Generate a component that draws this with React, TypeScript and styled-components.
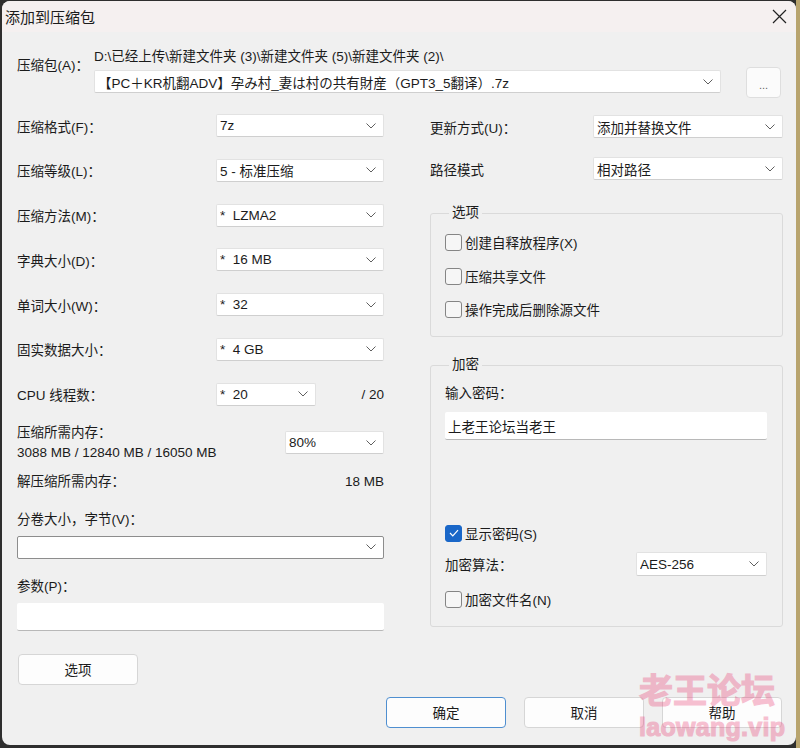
import React from 'react';
import styled, {createGlobalStyle} from 'styled-components';

const GlobalStyle = createGlobalStyle`
  html, body {
    margin: 0;
    padding: 0;
  }
  body {
    width: 800px;
    height: 748px;
    overflow: hidden;
    background: linear-gradient(to right, #2e2e2e 0 796px, #b8a46e 796px);
    font-family: "Liberation Sans", "Noto Sans CJK SC", sans-serif;
    font-size: 13.5px;
    color: #1b1b1b;
  }
`;

const Window = styled.div`
  position: relative;
  margin: 1px 0 0 2px;
  width: 794px;
  height: 744px;
  background: #f0f0f0;
  border-radius: 8px;
  overflow: hidden;
  display: flex;
  flex-direction: column;
`;

const TitleBar = styled.div`
  height: 31px;
  flex: none;
  display: flex;
  align-items: center;
  justify-content: space-between;
  padding: 0 9px 0 3px;
  background: #f5f0f0;
  font-size: 15px;
`;

const CloseIcon = styled.svg`
  width: 15px;
  height: 15px;
`;

const Content = styled.div`
  padding: 15px 13px 0 15px;
`;

const ArchiveRow = styled.div`
  display: flex;
  align-items: flex-start;
`;

const ArchiveLabel = styled.div`
  width: 77px;
  margin-top: 9px;
  line-height: 20px;
`;

const ArchiveMain = styled.div`
  width: 627px;
  display: flex;
  flex-direction: column;
  gap: 3px;
`;

const PathText = styled.div`
  line-height: 20px;
  white-space: nowrap;
`;

const BrowseButton = styled.div`
  margin: 20px 0 0 25px;
  width: 35px;
  height: 31px;
  box-sizing: border-box;
  background: #fbfbfb;
  border: 1px solid #dedede;
  border-radius: 4px;
  color: #666;
  font-size: 11px;
  display: flex;
  align-items: flex-end;
  justify-content: center;
  padding-bottom: 6px;
`;

const MainGrid = styled.div`
  margin-top: 16px;
  display: grid;
  grid-template-columns: 367px 353px;
  column-gap: 46px;
  align-items: start;
`;

const Column = styled.div<{ $gap?: number }>`
  display: flex;
  flex-direction: column;
  gap: ${(p) => p.$gap ?? 0}px;
`;

const FieldRow = styled.div`
  height: 23px;
  display: flex;
  align-items: center;
  justify-content: space-between;
`;

const CpuRow = styled(FieldRow)`
  justify-content: flex-start;
`;

const CpuLabel = styled.span`
  width: 199px;
  flex: none;
`;

const CpuTotal = styled.span`
  margin-left: auto;
`;

const ComboBox = styled.div<{ $width?: number; $height?: number; $outlined?: boolean }>`
  width: ${(p) => (p.$width ? `${p.$width}px` : '100%')};
  height: ${(p) => p.$height ?? 23}px;
  box-sizing: border-box;
  flex: none;
  background: #fff;
  border: 1px solid ${(p) => (p.$outlined ? '#8d8d8d' : '#e2e2e2')};
  border-bottom-color: ${(p) => (p.$outlined ? '#8d8d8d' : '#cfcfcf')};
  border-radius: 2px;
  display: flex;
  align-items: center;
  padding: 0 7px 0 3px;
  white-space: pre;
`;

const ComboValue = styled.span`
  flex: 1;
  overflow: hidden;
`;

const Chevron = styled.svg`
  width: 10px;
  height: 6px;
  flex: none;
`;

const TextLine = styled.div<{ $top?: number }>`
  line-height: 20px;
  margin-top: ${(p) => p.$top ?? 0}px;
  display: flex;
  justify-content: space-between;
  white-space: nowrap;
`;

const MemoryBlock = styled.div`
  margin-top: 17px;
  display: flex;
  align-items: center;
  justify-content: space-between;
`;

const TextInput = styled.div<{ $top?: number }>`
  margin-top: ${(p) => p.$top ?? 0}px;
  height: 28px;
  box-sizing: border-box;
  background: #fff;
  border-bottom: 1.5px solid #b8b8b8;
  border-radius: 2px;
  display: flex;
  align-items: center;
  padding: 0 3px;
`;

const PushButton = styled.div<{ $primary?: boolean }>`
  width: 120px;
  height: 31px;
  box-sizing: border-box;
  background: #fdfdfd;
  border: ${(p) => (p.$primary ? '1.5px solid #4f8fd0' : '1px solid #d6d6d6')};
  border-radius: 4px;
  display: flex;
  align-items: center;
  justify-content: center;
`;

const OptionsButton = styled(PushButton)`
  margin: 23px 0 0 1px;
`;

const Group = styled.fieldset<{ $top: number }>`
  margin: ${(p) => p.$top}px 0 0;
  padding: 0 15px 0 14px;
  border: 1px solid #dadada;
  border-radius: 3px;
  min-width: 0;
`;

const Legend = styled.legend`
  margin-left: 4px;
  padding: 0 3px;
  line-height: 20px;
`;

const CheckRow = styled.label<{ $top?: number }>`
  margin-top: ${(p) => p.$top ?? 0}px;
  height: 20px;
  display: flex;
  align-items: center;
  gap: 3px;
`;

const Box = styled.span<{ $checked?: boolean }>`
  width: 17px;
  height: 17px;
  box-sizing: border-box;
  border-radius: 3px;
  border: 1px solid ${(p) => (p.$checked ? '#1a67c8' : '#858585')};
  background: ${(p) => (p.$checked ? '#1a67c8' : '#f6f6f6')};
  display: flex;
  align-items: center;
  justify-content: center;
`;

const GroupBody = styled.div<{ $top: number; $bottom: number }>`
  display: flex;
  flex-direction: column;
  padding: ${(p) => p.$top}px 0 ${(p) => p.$bottom}px;
`;

const Footer = styled.div`
  margin: 12px 1px 0 0;
  display: flex;
  justify-content: flex-end;
  gap: 18px;
`;

const Watermark = styled.div`
  position: absolute;
  left: 637px;
  top: 671px;
  display: flex;
  flex-direction: column;
  color: #e8336c;
  opacity: 0.3;
  -webkit-text-stroke: 1.2px #e8336c;
  font-weight: 700;
  pointer-events: none;
`;

const WatermarkTitle = styled.div`
  font-family: "Noto Sans CJK SC", sans-serif;
  font-size: 34px;
  line-height: 34px;
`;

const WatermarkUrl = styled.div`
  margin-top: 9px;
  font-family: "Liberation Sans", sans-serif;
  font-size: 25px;
  line-height: 25px;
  letter-spacing: 0.3px;
`;

function Combo({value, width, height, outlined}: { value: string; width?: number; height?: number; outlined?: boolean }) {
    return (
        <ComboBox $width={width} $height={height} $outlined={outlined}>
            <ComboValue>{value}</ComboValue>
            <Chevron viewBox="0 0 10 6">
                <polyline points="0.5,0.5 5,5 9.5,0.5" fill="none" stroke="#5f5f5f" strokeWidth="1"/>
            </Chevron>
        </ComboBox>
    );
}

function Check({label, checked, top}: { label: string; checked?: boolean; top?: number }) {
    return (
        <CheckRow $top={top}>
            <Box $checked={checked}>
                {checked && (
                    <svg width="10" height="8" viewBox="0 0 10 8">
                        <polyline points="1,4 3.8,6.8 9,1.2" fill="none" stroke="#fff" strokeWidth="1.2"/>
                    </svg>
                )}
            </Box>
            {label}
        </CheckRow>
    );
}

const leftRows = [
    {label: '压缩格式(F)：', value: '7z'},
    {label: '压缩等级(L)：', value: '5 - 标准压缩'},
    {label: '压缩方法(M)：', value: '*  LZMA2'},
    {label: '字典大小(D)：', value: '*  16 MB'},
    {label: '单词大小(W)：', value: '*  32'},
    {label: '固实数据大小：', value: '*  4 GB'},
];

export default function App() {
    return (
        <>
            <GlobalStyle/>
            <Window>
                <TitleBar>
                    <span>添加到压缩包</span>
                    <CloseIcon viewBox="0 0 15 15">
                        <path d="M1 1 L14 14 M14 1 L1 14" stroke="#222" strokeWidth="1.2"/>
                    </CloseIcon>
                </TitleBar>

                <Content>
                    <ArchiveRow>
                        <ArchiveLabel>压缩包(A)：</ArchiveLabel>
                        <ArchiveMain>
                            <PathText>D:\已经上传\新建文件夹 (3)\新建文件夹 (5)\新建文件夹 (2)\</PathText>
                            <Combo value="【PC＋KR机翻ADV】孕み村_妻は村の共有財産（GPT3_5翻译）.7z"/>
                        </ArchiveMain>
                        <BrowseButton>...</BrowseButton>
                    </ArchiveRow>

                    <MainGrid>
                        <Column>
                            <Column $gap={21.8}>
                                {leftRows.map((r) => (
                                    <FieldRow key={r.label}>
                                        <span>{r.label}</span>
                                        <Combo value={r.value} width={168}/>
                                    </FieldRow>
                                ))}
                                <CpuRow>
                                    <CpuLabel>CPU 线程数：</CpuLabel>
                                    <Combo value="*  20" width={100}/>
                                    <CpuTotal>/ 20</CpuTotal>
                                </CpuRow>
                            </Column>

                            <MemoryBlock>
                                <div>
                                    <TextLine>压缩所需内存：</TextLine>
                                    <TextLine>3088 MB / 12840 MB / 16050 MB</TextLine>
                                </div>
                                <Combo value="80%" width={99}/>
                            </MemoryBlock>
                            <TextLine $top={9}>
                                <span>解压缩所需内存：</span>
                                <span>18 MB</span>
                            </TextLine>

                            <TextLine $top={18}>分卷大小，字节(V)：</TextLine>
                            <Column style={{marginTop: 6}}>
                                <Combo value="" outlined/>
                            </Column>

                            <TextLine $top={18}>参数(P)：</TextLine>
                            <TextInput $top={6}/>

                            <OptionsButton>选项</OptionsButton>
                        </Column>

                        <Column style={{paddingTop: 1}}>
                            <Column $gap={19}>
                                <FieldRow>
                                    <span>更新方式(U)：</span>
                                    <Combo value="添加并替换文件" width={190}/>
                                </FieldRow>
                                <FieldRow>
                                    <span>路径模式</span>
                                    <Combo value="相对路径" width={190}/>
                                </FieldRow>
                            </Column>

                            <Group $top={23}>
                                <Legend>选项</Legend>
                                <GroupBody $top={9} $bottom={17}>
                                    <Check label="创建自释放程序(X)"/>
                                    <Check label="压缩共享文件" top={14}/>
                                    <Check label="操作完成后删除源文件" top={13}/>
                                </GroupBody>
                            </Group>

                            <Group $top={18}>
                                <Legend>加密</Legend>
                                <GroupBody $top={9} $bottom={17}>
                                    <TextLine>输入密码：</TextLine>
                                    <TextInput $top={8}>上老王论坛当老王</TextInput>
                                    <Check label="显示密码(S)" checked top={83}/>
                                    <FieldRow style={{marginTop: 9, height: 24}}>
                                        <span>加密算法：</span>
                                        <Combo value="AES-256" width={131} height={24}/>
                                    </FieldRow>
                                    <Check label="加密文件名(N)" top={13}/>
                                </GroupBody>
                            </Group>
                        </Column>
                    </MainGrid>

                    <Footer>
                        <PushButton $primary>确定</PushButton>
                        <PushButton>取消</PushButton>
                        <PushButton>帮助</PushButton>
                    </Footer>
                </Content>

                <Watermark>
                    <WatermarkTitle>老王论坛</WatermarkTitle>
                    <WatermarkUrl>laowang.vip</WatermarkUrl>
                </Watermark>
            </Window>
        </>
    );
}
